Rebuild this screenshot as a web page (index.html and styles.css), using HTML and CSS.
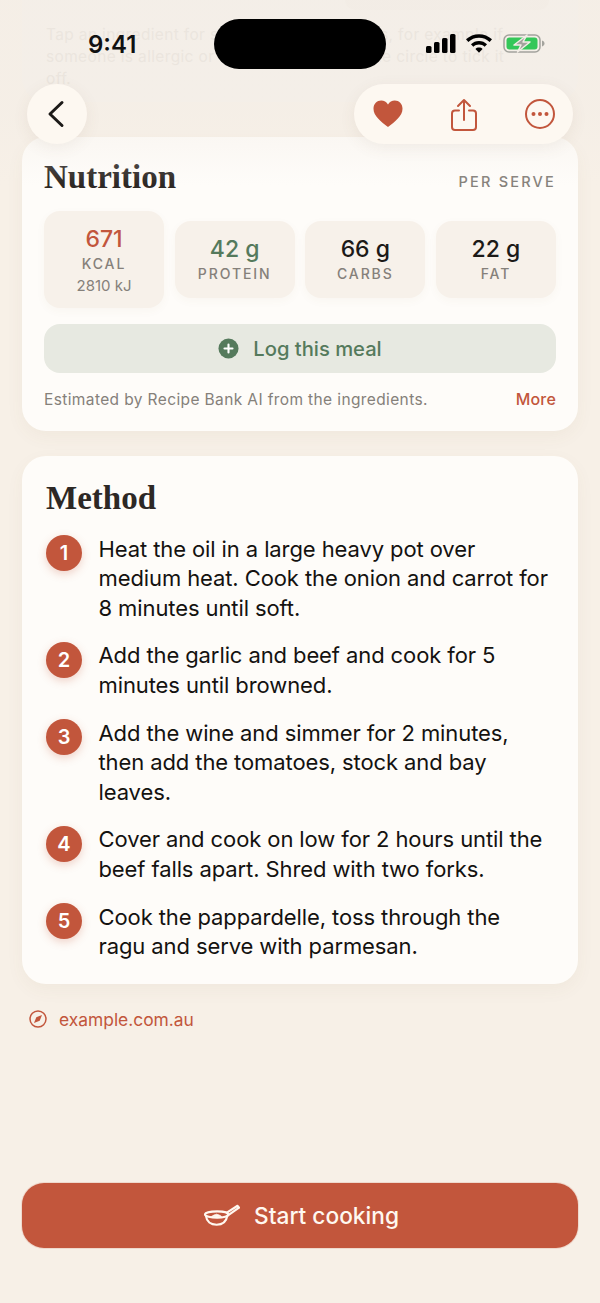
FILE: index.html
```html
<!DOCTYPE html>
<html lang="en">
<head>
<meta charset="utf-8">
<title>Recipe</title>
<link rel="stylesheet" href="styles.css">
</head>
<body>
<div class="page">
  <section class="card prev">
    <div class="prev-pill"></div>
    <p class="prev-text">Tap an ingredient for substitutes and options, for example if someone is allergic or out of an item. Tap the circle to tick it off.</p>
  </section>

  <section class="card nutrition">
    <div class="nut-head">
      <h2 class="serif nut-title">Nutrition</h2>
      <span class="per">PER SERVE</span>
    </div>
    <div class="stats">
      <div class="stat stat-big"><b class="val red">671</b><span class="lab">KCAL</span><span class="kj">2810 kJ</span></div>
      <div class="stat"><b class="val green">42 g</b><span class="lab">PROTEIN</span></div>
      <div class="stat"><b class="val">66 g</b><span class="lab">CARBS</span></div>
      <div class="stat"><b class="val">22 g</b><span class="lab">FAT</span></div>
    </div>
    <div class="log">
      <svg class="log-ico" viewBox="0 0 22 22"><circle cx="11" cy="11" r="10.5" fill="#557a5c"/><path d="M11 6.800v8.400M6.800 11h8.400" stroke="#fff" stroke-width="2.200" stroke-linecap="round"/></svg>
      <span>Log this meal</span>
    </div>
    <div class="note"><span>Estimated by Recipe Bank AI from the ingredients.</span><a class="more">More</a></div>
  </section>

  <section class="card method">
    <h2 class="serif method-title">Method</h2>
    <ol class="steps">
      <li class="step"><span class="num">1</span><p>Heat the oil in a large heavy pot over medium heat. Cook the onion and carrot for 8 minutes until soft.</p></li>
      <li class="step"><span class="num">2</span><p>Add the garlic and beef and cook for 5 minutes until browned.</p></li>
      <li class="step"><span class="num">3</span><p>Add the wine and simmer for 2 minutes, then add the tomatoes, stock and bay leaves.</p></li>
      <li class="step"><span class="num">4</span><p>Cover and cook on low for 2 hours until the beef falls apart. Shred with two forks.</p></li>
      <li class="step"><span class="num">5</span><p>Cook the pappardelle, toss through the ragu and serve with parmesan.</p></li>
    </ol>
  </section>

  <a class="source">
    <svg class="compass" viewBox="0 0 18 18"><circle cx="9" cy="9" r="8" fill="none" stroke="#c2563c" stroke-width="1.500"/><path d="M13 5 10.700 10.700 5 13 7.300 7.300Z" fill="#c2563c"/></svg>
    <span>example.com.au</span>
  </a>

  <button class="start">
    <svg class="pan" viewBox="1 1 37 23" fill="none" stroke="#fff8f0" stroke-width="2.200" stroke-linecap="round" stroke-linejoin="round"><path d="M2 11.500c0-1.800 6-3.200 12.500-3.200S26 9.700 26 11.500s-5 3.200-11.500 3.200S2 13.300 2 11.500Z"/><path d="M3 13c.6 5.500 5 9 11 9s10-3.500 11-9.500"/><path d="M24.500 9.500 35.500 2.500l1.500 2L26 12"/><path d="M9 13.500c1.500-1.500 3-1.500 5-2.300 1.500.8 3.500.8 5 2.300-3 .6-7 .6-10 0Z" fill="#fff8f0" stroke-width="1"/></svg>
    <span>Start cooking</span>
  </button>
</div>

<div class="top-veil"></div>

<div class="status">
  <span class="time">9:41</span>
  <div class="island"></div>
  <div class="status-icons">
    <svg class="sig" viewBox="0 0 30 19"><rect x="0" y="12" width="5.500" height="7" rx="1.500"/><rect x="8" y="8" width="5.500" height="11" rx="1.500"/><rect x="16" y="4" width="5.500" height="15" rx="1.500"/><rect x="24" y="0" width="5.500" height="19" rx="1.500"/></svg>
    <svg class="wifi" viewBox="2 2.200 22 15.800"><path d="M13 2.200c4.200 0 8 1.600 11 4.400l-2 2.200C19.600 6.500 16.500 5.200 13 5.200S6.400 6.500 4 8.800L2 6.600C5 3.800 8.800 2.200 13 2.200Z"/><path d="M13 8c2.600 0 5 1 6.800 2.800l-2 2.100C16.500 11.700 14.800 11 13 11s-3.500.7-4.800 1.900l-2-2.100C8 9 10.400 8 13 8Z"/><path d="M13 13.500c1.200 0 2.200.4 3 1.200L13 18l-3-3.300c.8-.8 1.800-1.200 3-1.200Z"/></svg>
    <svg class="batt" viewBox="0 0 42 19"><rect x="1" y="1" width="36" height="17" rx="5" fill="none" stroke="#a3a39d" stroke-width="1.500"/><rect x="3.500" y="3.500" width="31" height="12" rx="3" fill="#34c759"/><path d="M39 6.500v6c1.500-.4 2.500-1.600 2.500-3s-1-2.600-2.500-3Z" fill="#a3a39d"/><path d="M24 1 11 11h7l-3.500 7L27 8h-7Z" fill="#a3a39d" stroke="#f3ede6" stroke-width="1.500" stroke-linejoin="round"/></svg>
  </div>
</div>

<button class="back" aria-label="Back">
  <svg viewBox="0 0 18 28" fill="none" stroke="#1c1a18" stroke-width="3" stroke-linecap="round" stroke-linejoin="round"><path d="M15 2.500 3 14l12 11.500"/></svg>
</button>

<div class="actions">
  <svg class="heart" viewBox="0 0 30 28"><path d="M15 27C8 21.500 .5 16 .5 8.700.5 4 4 .6 8.200.6c2.900 0 5.300 1.500 6.800 4 1.500-2.500 3.900-4 6.800-4C26 .6 29.500 4 29.500 8.700 29.500 16 22 21.500 15 27Z" fill="#c2563c"/></svg>
  <svg class="share" viewBox="0 0 28 34" fill="none" stroke="#c2563c" stroke-width="2" stroke-linecap="round" stroke-linejoin="round"><path d="M9 12.500H5a3 3 0 0 0-3 3V29a3 3 0 0 0 3 3h18a3 3 0 0 0 3-3V15.500a3 3 0 0 0-3-3h-4"/><path d="M14 22V2M8 8l6-6 6 6"/></svg>
  <svg class="dots" viewBox="0 0 30 30"><circle cx="15" cy="15" r="14" fill="none" stroke="#c2563c" stroke-width="2"/><circle cx="8.500" cy="15" r="2" fill="#c2563c"/><circle cx="15" cy="15" r="2" fill="#c2563c"/><circle cx="21.500" cy="15" r="2" fill="#c2563c"/></svg>
</div>
</body>
</html>
```
FILE: styles.css
```css
* { box-sizing: border-box; }
html, body { margin: 0; padding: 0; }
body {
  width: 600px;
  height: 1303px;
  overflow: hidden;
  background: #f7f0e7;
  font-family: Inter, "Liberation Sans", sans-serif;
  color: #1c1a18;
  position: relative;
}
.page {
  display: flex;
  flex-direction: column;
  padding: 0 22px;
  height: 1303px;
}
.card {
  background: #fefcf9;
  border-radius: 24px;
  box-shadow: 0 6px 18px rgba(120, 90, 60, 0.05);
}
.serif {
  font-family: "Liberation Serif", "DejaVu Serif", serif;
  font-weight: 700;
  margin: 0;
  color: #2d2825;
}
.prev {
  height: 112px;
  margin-top: -10px;
  padding: 0 48px 0 24px;
  border-radius: 0 0 24px 24px;
  background: #f5f0ea;
  box-shadow: none;
}
.prev-pill {
  height: 20px;
  width: 204px;
  margin: 0 -19px 14px auto;
  border-radius: 10px;
  background: #f2ece5;
}
.prev-text {
  margin: 0;
  font-size: 15.500px;
  letter-spacing: 0.350px;
  line-height: 22px;
  color: #e2dcd5;
}
.nutrition {
  margin-top: 35px;
  height: 294px;
  padding: 21px 22px 0;
}
.nut-head {
  display: flex;
  justify-content: space-between;
  align-items: center;
  height: 38px;
}
.nut-title { font-size: 33px; line-height: 38px; }
.per {
  font-size: 14.500px;
  font-weight: 500;
  letter-spacing: 2.200px;
  color: #85807a;
  margin-top: 9px;
}
.stats {
  display: grid;
  grid-template-columns: 120px 120px 120px 120px;
  justify-content: space-between;
  align-items: center;
  margin-top: 15px;
}
.stat {
  height: 77px;
  border-radius: 16px;
  background: #f7f1ea;
  box-shadow: 0 3px 10px rgba(120, 90, 60, 0.04);
  display: flex;
  flex-direction: column;
  align-items: center;
  padding-top: 15px;
}
.stat-big { height: 97px; }
.val {
  font-size: 23px;
  line-height: 26px;
  font-weight: 500;
  color: #1c1a18;
}
.red { color: #c2563c; }
.green { color: #557a5c; }
.lab {
  font-size: 14px;
  line-height: 20px;
  font-weight: 500;
  letter-spacing: 1.900px;
  color: #85807a;
  margin-top: 2px;
}
.kj {
  font-size: 15px;
  line-height: 20px;
  color: #85807a;
  margin-top: 2px;
}
.log {
  height: 49px;
  margin-top: 16px;
  border-radius: 16px;
  background: #e7e9e1;
  color: #557a5c;
  font-size: 20.200px;
  font-weight: 500;
  display: flex;
  align-items: center;
  justify-content: center;
  gap: 14px;
}
.log-ico { width: 21px; height: 21px; }
.note {
  display: flex;
  justify-content: space-between;
  align-items: baseline;
  margin-top: 15px;
  font-size: 15.500px;
  letter-spacing: 0.380px;
  line-height: 22px;
  color: #85807a;
}
.more { color: #c2563c; font-weight: 500; font-size: 16px; letter-spacing: 0.200px; }
.method {
  margin-top: 25px;
  height: 528px;
  padding: 23px 28px 0 24px;
}
.method-title { font-size: 33px; line-height: 38px; }
.steps {
  list-style: none;
  margin: 17px 0 0;
  padding: 0;
  display: flex;
  flex-direction: column;
  gap: 17.300px;
}
.step {
  display: flex;
  gap: 16.500px;
  align-items: flex-start;
}
.step p {
  margin: 0.700px 0 0;
  font-size: 22px;
  line-height: 29.600px;
  color: #141210;
  letter-spacing: -0.100px;
}
.num {
  flex: none;
  width: 36px;
  height: 36px;
  border-radius: 50%;
  background: #c2563c;
  color: #fff;
  font-weight: 600;
  font-size: 20px;
  display: flex;
  align-items: center;
  justify-content: center;
  margin-top: 1px;
  box-shadow: 0 3px 8px rgba(194, 86, 60, 0.25);
}
.source {
  display: flex;
  align-items: center;
  gap: 12px;
  margin: 24px 0 0 7px;
  height: 22px;
  font-size: 17.400px;
  color: #c2563c;
}
.compass { width: 18px; height: 18px; }
.start {
  margin-top: 153px;
  height: 65px;
  width: 100%;
  border: 0;
  padding: 0 0 0 3px;
  border-radius: 22px;
  background: #c2563c;
  color: #fff8f0;
  font-family: inherit;
  font-size: 22.700px;
  font-weight: 500;
  display: flex;
  align-items: center;
  justify-content: center;
  gap: 14px;
  box-shadow: 0 0 0 1px rgba(194, 86, 60, 0.15);
}
.pan { width: 36px; height: 23px; }
.top-veil {
  position: absolute;
  left: 0;
  top: 0;
  width: 600px;
  height: 185px;
  background: linear-gradient(to bottom, rgba(243, 237, 230, 0.55) 0, rgba(243, 237, 230, 0.5) 60%, rgba(243, 237, 230, 0) 100%);
  pointer-events: none;
}
.status {
  position: absolute;
  left: 0;
  top: 0;
  width: 600px;
  height: 70px;
}
.time {
  position: absolute;
  left: 88px;
  top: 30px;
  font-size: 24px;
  line-height: 30px;
  font-weight: 600;
  color: #111;
}
.island {
  position: absolute;
  left: 214px;
  top: 19px;
  width: 172px;
  height: 50px;
  border-radius: 25px;
  background: #000;
}
.status-icons {
  position: absolute;
  left: 426px;
  top: 34px;
  display: flex;
  align-items: center;
  gap: 10px;
}
.sig { width: 30px; height: 19px; fill: #000; }
.wifi { width: 26px; height: 19px; fill: #000; }
.batt { width: 42px; height: 19px; margin-left: 1px; }
.back {
  position: absolute;
  left: 27px;
  top: 84px;
  width: 60px;
  height: 60px;
  border: 0;
  padding: 0 2px 0 0;
  border-radius: 50%;
  background: #fdf8f1;
  display: flex;
  align-items: center;
  justify-content: center;
  box-shadow: 0 4px 16px rgba(120, 90, 60, 0.08);
}
.back svg { width: 18px; height: 28px; }
.actions {
  position: absolute;
  left: 354px;
  top: 84px;
  width: 219px;
  height: 60px;
  border-radius: 30px;
  background: #fdf8f1;
  display: flex;
  align-items: center;
  justify-content: space-between;
  padding: 0 18px 0 19px;
  box-shadow: 0 4px 16px rgba(120, 90, 60, 0.08);
}
.heart { width: 30px; height: 28px; }
.share { width: 28px; height: 34px; margin-bottom: -2px; }
.dots { width: 30px; height: 30px; }
```
